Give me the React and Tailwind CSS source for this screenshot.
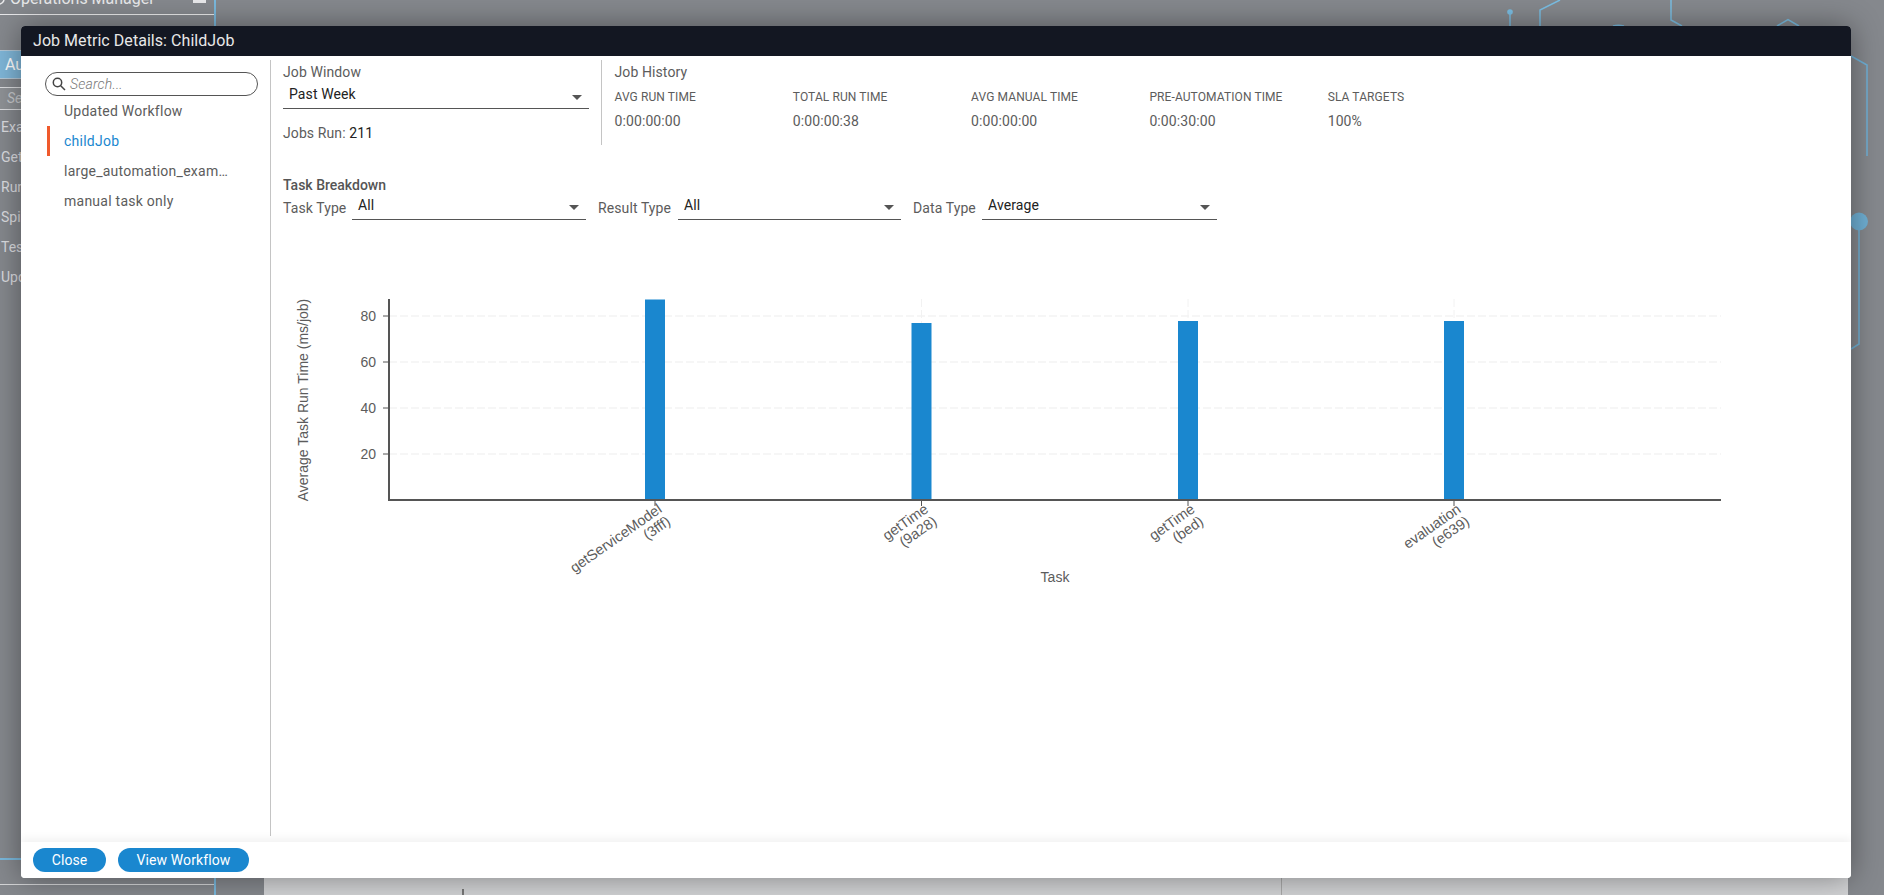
import React from "react";

function Caret({ className = "" }) {
  return (
    <svg width="10" height="5" viewBox="0 0 10 5" className={className}>
      <path d="M0 0H10L5 5Z" fill="#555" />
    </svg>
  );
}

function FilterSelect({ label, value, labelW, selectW }) {
  return (
    <div className="flex h-[25px]">
      <div className={`${labelW} leading-[26px] text-[14px] text-[#5c5c5c] tracking-[0.1px]`}>{label}</div>
      <div className={`${selectW} h-[25px] flex items-center justify-between border-b border-[#555] pb-1 pl-[6px] pr-[7px]`}>
        <span className="text-[14px] text-[#222] tracking-[0.1px]">{value}</span>
        <Caret className="mt-1" />
      </div>
    </div>
  );
}

function Stat({ label, value }) {
  return (
    <div>
      <div className="h-4 mt-[5px] leading-4 text-[12px] text-[#5c5c5c] tracking-[0.1px] whitespace-nowrap">{label}</div>
      <div className="h-[18px] mt-[7px] leading-[18px] text-[14px] text-[#5c5c5c] tracking-[0.1px]">{value}</div>
    </div>
  );
}

function Chart() {
  const grid = [316, 362, 408, 454];
  const labels = ["80", "60", "40", "20"];
  const bars = [
    { x: 645, top: 299.5, a: "getServiceModel", b: "(3fff)" },
    { x: 911.5, top: 323, a: "getTime", b: "(9a28)" },
    { x: 1178, top: 321, a: "getTime", b: "(bed)" },
    { x: 1444, top: 321, a: "evaluation", b: "(e639)" },
  ];
  return (
    <svg viewBox="283 280 1450 310" width="1450" height="310" className="mt-[60px] block" style={{ fontFamily: "'Liberation Sans', Arial, sans-serif" }}>
      {grid.map((y) => (
        <line key={y} x1="389" x2="1721" y1={y} y2={y} stroke="#f6f6f6" strokeWidth="2" strokeDasharray="8 3" />
      ))}
      {bars.map((b) => (
        <line key={b.x} x1={b.x + 10} x2={b.x + 10} y1="299" y2={b.top} stroke="#f2f2f2" strokeWidth="1" strokeDasharray="8 3" />
      ))}
      {grid.map((y, i) => (
        <g key={y}>
          <line x1="383" x2="389" y1={y} y2={y} stroke="#555" strokeWidth="1" />
          <text x="376" y={y + 5} textAnchor="end" fontSize="14" fill="#5c5c5c">{labels[i]}</text>
        </g>
      ))}
      {bars.map((b) => (
        <g key={b.x}>
          <rect x={b.x} y={b.top} width="20" height={500 - b.top} fill="#1a87cf" />
          <line x1={b.x + 10} x2={b.x + 10} y1="500" y2="506" stroke="#555" strokeWidth="1" />
          <g transform={`translate(${b.x + 10}, 507) rotate(-35)`} fontSize="14.5" fill="#5c5c5c">
            <text x="4" y="8" textAnchor="end">{b.a}</text>
            <text x="4" y="23" textAnchor="end">{b.b}</text>
          </g>
        </g>
      ))}
      <path d="M389 299V500H1721" fill="none" stroke="#555" strokeWidth="2" />
      <text transform="translate(308, 400) rotate(-90)" textAnchor="middle" fontSize="14" fill="#5c5c5c">Average Task Run Time (ms/job)</text>
      <text x="1055" y="582" textAnchor="middle" fontSize="14" fill="#5c5c5c">Task</text>
    </svg>
  );
}

function Backdrop() {
  return (
    <div className="absolute inset-0 flex bg-[#85888d]">
      <div className="w-[216px] h-full flex flex-col border-r-2 border-[#7ab8dc] text-[14px] text-[#dcdde0]">
        <div className="h-[15px] shrink-0 border-b border-[#e8e8ea] overflow-hidden flex justify-between pr-2">
          <div className="flex -mt-[11px] items-center gap-1 h-5">
            <svg width="10" height="14" viewBox="0 0 10 14" className="-ml-1"><circle cx="3" cy="7" r="5" fill="none" stroke="#e8e8ea" strokeWidth="1.5" /></svg>
            <span className="text-[16px] text-[#e8e8ea]">Operations Manager</span>
          </div>
          <div className="w-[13px] h-[3px] bg-[#e8e8ea]" />
        </div>
        <div className="mt-[35px] h-[29px] shrink-0 bg-[#7fb6d8] border-y border-[#b5c8d6] pl-[5px] text-[16px] leading-[27px] text-white">Automation</div>
        <div className="mt-2 h-[23px] shrink-0 bg-[#8f9296] border-y border-[#dcdde0] pl-[7px] italic text-[14px] leading-[21px] text-[#c8cacd]">Search</div>
        <div className="mt-[2px] pl-[1px]">
          {["Example", "Get", "Run", "Spin", "Test", "Update"].map((t) => (
            <div key={t} className="h-[30px] leading-[30px]">{t}</div>
          ))}
        </div>
        <div className="mt-auto h-[2px] w-full bg-[#7ab8dc]" />
        <div className="mt-[24px] h-[1px] w-full bg-[#d5d6d8]" />
        <div className="h-[10px]" />
      </div>
      <div className="flex-1 flex flex-col justify-end pl-[48px] pr-[36px]">
        <div className="relative h-[40px] bg-[#d2d3d5]">
          <div className="absolute left-[198px] bottom-0 h-[6px] w-[2px] bg-[#777]" />
          <div className="absolute left-[1017px] bottom-0 h-[40px] w-[1px] bg-[#aaa]" />
        </div>
      </div>
      <svg className="absolute inset-0" width="1884" height="895" fill="none" stroke="#7abde2" strokeWidth="1.5">
        <circle cx="1510" cy="12" r="2.8" fill="#7abde2" stroke="none" />
        <path d="M1510 12V28" />
        <path d="M1540 28V10L1560 0" />
        <path d="M1671 0V20L1682 26" />
        <path d="M1777 26L1788 19.5L1799 26" />
        <path d="M1613 26Q1618 24.5 1624 26" />
        <path d="M1851 56L1867 65V156" stroke="#6fb0d6" />
        <circle cx="1859" cy="221.5" r="9" fill="#6fafd3" stroke="none" />
        <path d="M1859 225V344L1851 349" stroke="#6fafd3" />
      </svg>
    </div>
  );
}

export default function App() {
  return (
    <div className="relative w-full h-[895px] overflow-hidden font-[Roboto,sans-serif]">
      <Backdrop />
      <div className="absolute left-[21px] top-[26px] w-[1830px] h-[852px] flex flex-col bg-white rounded-[4px] overflow-hidden shadow-[0_0_30px_rgba(0,0,0,0.4)]">
        <div className="h-[30px] shrink-0 bg-[#131722] pl-3 text-[16px] leading-[30px] tracking-[0.05px] text-[#e8e8e8]">Job Metric Details: ChildJob</div>
        <div className="flex-1 min-h-0 flex pt-1 pb-[6px]">
          <div className="w-[250px] shrink-0 border-r border-[#c4c4c4] pl-[24px] pt-3">
            <div className="w-[213px] h-6 rounded-full border border-[#555] flex items-center pl-1.5 gap-1">
              <svg width="14" height="14" viewBox="0 0 14 14" fill="none" stroke="#444" strokeWidth="1.5"><circle cx="5.5" cy="5.5" r="4.2" /><path d="M8.7 8.7L13 13" /></svg>
              <span className="italic text-[14px] text-[#777] font-light tracking-[0.2px]">Search...</span>
            </div>
            <div className="ml-[2px]">
              {[
                ["Updated Workflow", false],
                ["childJob", true],
                ["large_automation_example", false],
                ["manual task only", false],
              ].map(([t, active]) => (
                <div key={t} className={`h-[30px] pl-[14px] leading-[30px] text-[14px] tracking-[0.25px] border-l-[3px] ${active ? "border-[#f05a2c] text-[#1a87cf]" : "border-transparent text-[#5c5c5c]"}`}>
                  <div className="w-[166px] truncate">{t}</div>
                </div>
              ))}
            </div>
          </div>
          <div className="flex-1 min-w-0 pl-3">
            <div className="flex h-[85px]">
              <div className="w-[306px] shrink-0">
                <div className="h-6 leading-6 text-[14px] text-[#5c5c5c] tracking-[0.1px]">Job Window</div>
                <div className="h-[25px] flex items-center justify-between border-b border-[#555] pb-[3px] pl-[6px] pr-[7px]">
                  <span className="text-[14px] text-[#222] tracking-[0.1px]">Past Week</span>
                  <Caret className="mt-[5px]" />
                </div>
                <div className="mt-[14px] h-5 leading-5 text-[14px] text-[#5c5c5c] tracking-[0.1px]">Jobs Run: <span className="text-[#222]">211</span></div>
              </div>
              <div className="ml-3 pl-[12.5px] border-l border-[#c4c4c4] flex-1">
                <div className="h-6 leading-6 text-[14px] text-[#5c5c5c] tracking-[0.1px]">Job History</div>
                <div className="grid grid-cols-[repeat(5,178.3px)]">
                  <Stat label="AVG RUN TIME" value="0:00:00:00" />
                  <Stat label="TOTAL RUN TIME" value="0:00:00:38" />
                  <Stat label="AVG MANUAL TIME" value="0:00:00:00" />
                  <Stat label="PRE-AUTOMATION TIME" value="0:00:30:00" />
                  <Stat label="SLA TARGETS" value="100%" />
                </div>
              </div>
            </div>
            <div className="mt-[30px] h-5 leading-5 text-[14px] font-medium text-[#555]">Task Breakdown</div>
            <div className="flex">
              <FilterSelect label="Task Type" value="All" labelW="w-[69px]" selectW="w-[234px]" />
              <div className="w-[12px]" />
              <FilterSelect label="Result Type" value="All" labelW="w-[80px]" selectW="w-[223px]" />
              <div className="w-[12px]" />
              <FilterSelect label="Data Type" value="Average" labelW="w-[69px]" selectW="w-[235px]" />
            </div>
            <Chart />
          </div>
        </div>
        <div className="h-9 shrink-0 flex items-center gap-3 pl-3 bg-white shadow-[0_-4px_8px_rgba(0,0,0,0.05)] relative">
          <button className="w-[73px] h-6 rounded-full bg-[#1a87cf] text-[14px] text-white tracking-[0.1px]">Close</button>
          <button className="w-[131px] h-6 rounded-full bg-[#1a87cf] text-[14px] text-white tracking-[0.1px]">View Workflow</button>
        </div>
      </div>
    </div>
  );
}
